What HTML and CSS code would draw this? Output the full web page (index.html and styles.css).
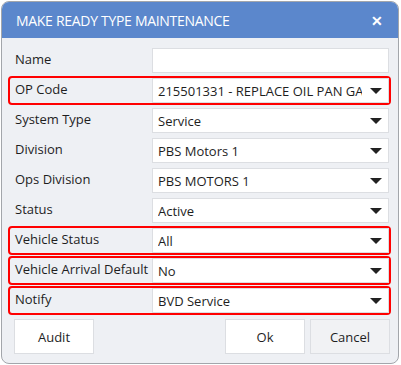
FILE: index.html
```html
<!DOCTYPE html>
<html lang="en">
<head>
  <meta charset="UTF-8" />
  <title>Make Ready Type Maintenance</title>
  <link rel="stylesheet" href="styles.css">
</head>
<body>

  <div class="dialog">
    <div class="dialog-title">
      <span>MAKE READY TYPE MAINTENANCE</span>
      <span class="close">&#x2715;</span>
    </div>

    <div class="dialog-body">
      <div class="row">
        <label>Name</label>
        <div class="field"></div>
      </div>
      <div class="row hl">
        <label>OP Code</label>
        <div class="field select"><span class="value">215501331 - REPLACE OIL PAN GASKET</span><span class="caret"></span></div>
      </div>
      <div class="row">
        <label>System Type</label>
        <div class="field select"><span class="value">Service</span><span class="caret"></span></div>
      </div>
      <div class="row">
        <label>Division</label>
        <div class="field select"><span class="value">PBS Motors 1</span><span class="caret"></span></div>
      </div>
      <div class="row">
        <label>Ops Division</label>
        <div class="field select"><span class="value">PBS MOTORS 1</span><span class="caret"></span></div>
      </div>
      <div class="row">
        <label>Status</label>
        <div class="field select"><span class="value">Active</span><span class="caret"></span></div>
      </div>
      <div class="row hl">
        <label>Vehicle Status</label>
        <div class="field select"><span class="value">All</span><span class="caret"></span></div>
      </div>
      <div class="row hl">
        <label>Vehicle Arrival Default</label>
        <div class="field select"><span class="value">No</span><span class="caret"></span></div>
      </div>
      <div class="row hl">
        <label>Notify</label>
        <div class="field select"><span class="value">BVD Service</span><span class="caret"></span></div>
      </div>

      <div class="actions">
        <button class="btn">Audit</button>
        <span class="spacer"></span>
        <button class="btn">Ok</button>
        <button class="btn btn-cancel">Cancel</button>
      </div>
    </div>
  </div>

</body>
</html>
```

FILE: styles.css
```css
:root {
  --title-bg: #5b87cc;
  --body-bg: #eef0f4;
  --frame: #a3a6ab;
  --field-border: #dcdee2;
  --text: #1e1e1e;
  --hl: #ff0000;
}
* { box-sizing: border-box; }
body {
  margin: 0;
  background: #fff;
  font-family: "Open Sans", sans-serif;
  color: var(--text);
}
.dialog {
  margin: 1px 0 0 1px;
  width: 398px;
  height: 363px;
  border: 1px solid var(--frame);
  border-radius: 8px;
  overflow: hidden;
  background: var(--body-bg);
  display: flex;
  flex-direction: column;
}
.dialog-title {
  height: 36px;
  flex: none;
  background: var(--title-bg);
  color: #fff;
  display: flex;
  align-items: center;
  justify-content: space-between;
  padding: 0 15px 0 14px;
  font-size: 14px;
  letter-spacing: -0.3px;
}
.close {
  font-size: 14px;
  font-weight: bold;
}
.dialog-body {
  padding: 8px 7px 0 6px;
  display: flex;
  flex-direction: column;
  gap: 1px;
}
.row {
  display: flex;
  align-items: center;
  border: 2px solid transparent;
  border-radius: 4px;
  height: 29px;
}
.row.hl {
  border-color: var(--hl);
}
.row label {
  width: 142px;
  flex: none;
  padding-left: 5px;
  font-size: 13px;
  white-space: nowrap;
  position: relative;
  top: -2px;
}
.field {
  flex: 1;
  min-width: 0;
  height: 25px;
  background: #fff;
  border: 1px solid var(--field-border);
}
.select {
  display: flex;
  align-items: center;
  padding: 0 6px 0 5px;
  font-size: 13px;
}
.value {
  flex: 1;
  min-width: 0;
  white-space: nowrap;
  overflow: hidden;
}
.caret {
  flex: none;
  margin-left: 8px;
  width: 0;
  height: 0;
  border-left: 6px solid transparent;
  border-right: 6px solid transparent;
  border-top: 6px solid #222;
}
.actions {
  display: flex;
  gap: 5px;
  padding: 3px 1px 0 6px;
}
.spacer { flex: 1; }
.btn {
  width: 80px;
  height: 35px;
  background: #fff;
  border: 1px solid var(--field-border);
  font-family: inherit;
  font-size: 13px;
  color: var(--text);
}
.btn-cancel {
  background: #f1f2f4;
}
```
